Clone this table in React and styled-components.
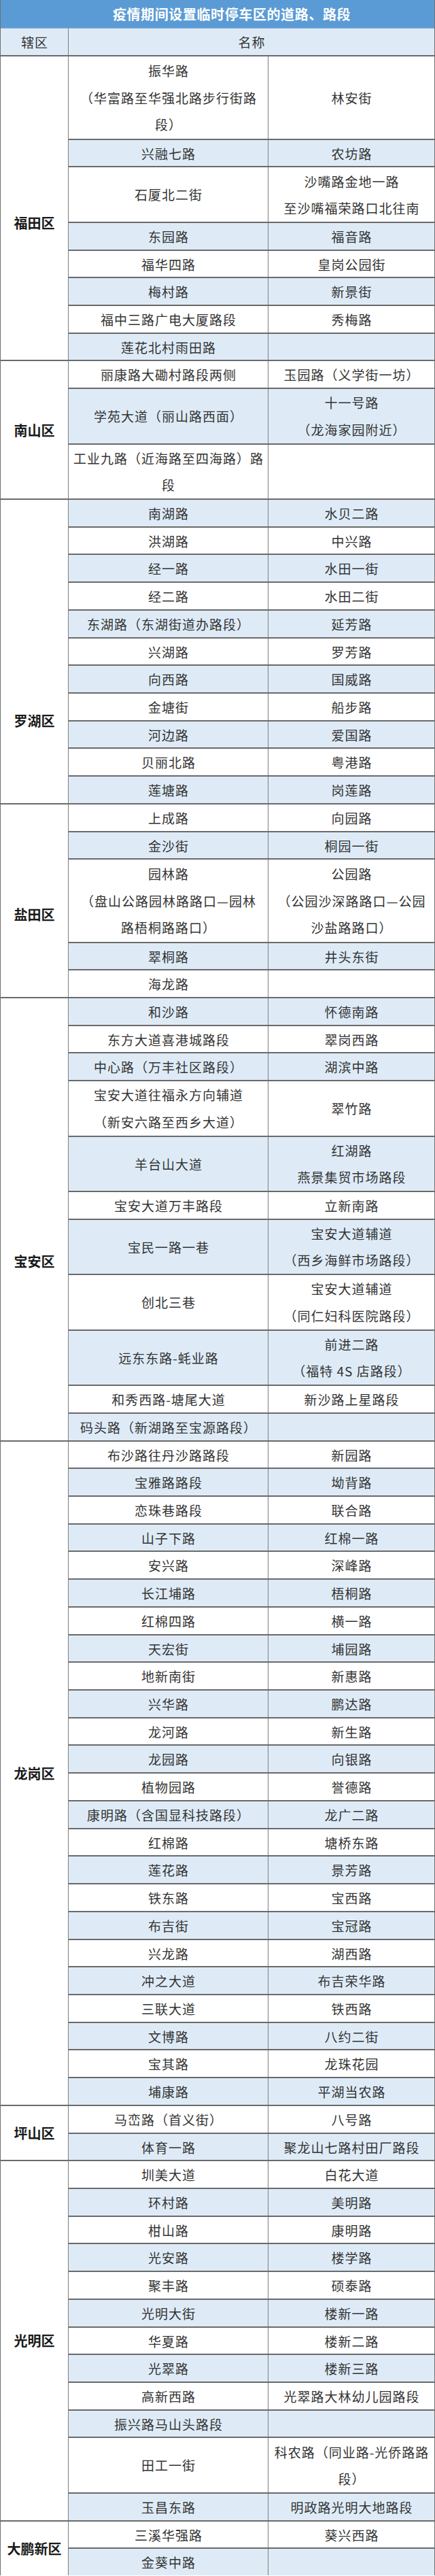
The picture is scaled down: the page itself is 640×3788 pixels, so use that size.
import React from 'react';
import styled, { createGlobalStyle } from 'styled-components';

const LINE = 3788 / 93;

const GlobalStyle = createGlobalStyle`
  html, body { margin: 0; padding: 0; background: #ffffff; }
  body { font-family: "Noto Sans CJK SC", "Noto Sans", sans-serif; }
`;

const Sheet = styled.div`
  width: 640px;
  box-sizing: border-box;
  border-left: 1px solid #6f6f6f;
  border-right: 1px solid #6f6f6f;
  font-family: "Noto Sans CJK SC", "Noto Sans", sans-serif;
`;

const TitleBar = styled.div`
  height: ${LINE}px;
  box-sizing: border-box;
  display: flex;
  align-items: center;
  justify-content: center;
  padding-left: 42px;
  background: #5b9bd5;
  color: #ffffff;
  font-size: 20px;
  font-weight: 700;
  letter-spacing: 0.6px;
  white-space: nowrap;
`;

const HeaderRow = styled.div`
  display: grid;
  grid-template-columns: 100px 1fr;
  height: ${LINE}px;
  box-sizing: border-box;
  background: #deebf7;
  border-top: 1px solid #8eaed6;
`;

const HeaderCell = styled.div`
  display: flex;
  align-items: center;
  justify-content: center;
  font-size: 19px;
  letter-spacing: 1px;
  padding-left: 1px;
  color: #333333;
  border-right: ${(p) => (p.$divider ? '1px solid #7d7d7d' : 'none')};
`;

const Group = styled.section`
  display: grid;
  grid-template-columns: 100px 1fr;
`;

const DistrictCell = styled.div`
  box-sizing: border-box;
  border-top: 2px solid #6a6a6a;
  border-right: 1px solid #7d7d7d;
  display: flex;
  align-items: center;
  justify-content: center;
  padding-top: ${(p) => p.$shift * 2}px;
  font-size: 20px;
  font-weight: 700;
  color: #1a1a1a;
  background: #ffffff;
  white-space: nowrap;
`;

const RoadList = styled.div`
  display: flex;
  flex-direction: column;
`;

const RoadRow = styled.div`
  display: grid;
  grid-template-columns: 294px 1fr;
  height: ${(p) => p.$lines * LINE}px;
  box-sizing: border-box;
  border-top: 2px solid #6a6a6a;
  background: ${(p) => (p.$shaded ? '#deebf7' : '#ffffff')};
`;

const RoadCell = styled.div`
  display: flex;
  flex-direction: column;
  align-items: center;
  justify-content: center;
  border-right: ${(p) => (p.$divider ? '1px solid #7d7d7d' : 'none')};
  font-size: 19px;
  letter-spacing: 1px;
  padding-left: 1px;
  color: #333333;
  line-height: 39.5px;
  white-space: nowrap;
`;

const TextLine = styled.span`
  display: block;
`;

const districts = [
  {
    name: '福田区',
    shift: 21,
    rows: [
      [['振华路', '（华富路至华强北路步行街路', '段）'], ['林安街']],
      [['兴融七路'], ['农坊路']],
      [['石厦北二街'], ['沙嘴路金地一路', '至沙嘴福荣路口北往南']],
      [['东园路'], ['福音路']],
      [['福华四路'], ['皇岗公园街']],
      [['梅村路'], ['新景街']],
      [['福中三路广电大厦路段'], ['秀梅路']],
      [['莲花北村雨田路'], []],
    ],
  },
  {
    name: '南山区',
    shift: 0,
    rows: [
      [['丽康路大磡村路段两侧'], ['玉园路（义学街一坊）']],
      [['学苑大道（丽山路西面）'], ['十一号路', '（龙海家园附近）']],
      [['工业九路（近海路至四海路）路', '段'], []],
    ],
  },
  {
    name: '罗湖区',
    shift: 102,
    rows: [
      [['南湖路'], ['水贝二路']],
      [['洪湖路'], ['中兴路']],
      [['经一路'], ['水田一街']],
      [['经二路'], ['水田二街']],
      [['东湖路（东湖街道办路段）'], ['延芳路']],
      [['兴湖路'], ['罗芳路']],
      [['向西路'], ['国威路']],
      [['金塘街'], ['船步路']],
      [['河边路'], ['爱国路']],
      [['贝丽北路'], ['粤港路']],
      [['莲塘路'], ['岗莲路']],
    ],
  },
  {
    name: '盐田区',
    shift: 20,
    rows: [
      [['上成路'], ['向园路']],
      [['金沙街'], ['桐园一街']],
      [
        ['园林路', '（盘山公路园林路路口—园林', '路梧桐路路口）'],
        ['公园路', '（公园沙深路路口—公园', '沙盐路路口）'],
      ],
      [['翠桐路'], ['井头东街']],
      [['海龙路'], []],
    ],
  },
  {
    name: '宝安区',
    shift: 62,
    rows: [
      [['和沙路'], ['怀德南路']],
      [['东方大道喜港城路段'], ['翠岗西路']],
      [['中心路（万丰社区路段）'], ['湖滨中路']],
      [['宝安大道往福永方向辅道', '（新安六路至西乡大道）'], ['翠竹路']],
      [['羊台山大道'], ['红湖路', '燕景集贸市场路段']],
      [['宝安大道万丰路段'], ['立新南路']],
      [['宝民一路一巷'], ['宝安大道辅道', '（西乡海鲜市场路段）']],
      [['创北三巷'], ['宝安大道辅道', '（同仁妇科医院路段）']],
      [['远东东路-蚝业路'], ['前进二路', '（福特 4S 店路段）']],
      [['和秀西路-塘尾大道'], ['新沙路上星路段']],
      [['码头路（新湖路至宝源路段）'], []],
    ],
  },
  {
    name: '龙岗区',
    shift: 0,
    rows: [
      [['布沙路往丹沙路路段'], ['新园路']],
      [['宝雅路路段'], ['坳背路']],
      [['恋珠巷路段'], ['联合路']],
      [['山子下路'], ['红棉一路']],
      [['安兴路'], ['深峰路']],
      [['长江埔路'], ['梧桐路']],
      [['红棉四路'], ['横一路']],
      [['天宏街'], ['埔园路']],
      [['地新南街'], ['新惠路']],
      [['兴华路'], ['鹏达路']],
      [['龙河路'], ['新生路']],
      [['龙园路'], ['向银路']],
      [['植物园路'], ['誉德路']],
      [['康明路（含国显科技路段）'], ['龙广二路']],
      [['红棉路'], ['塘桥东路']],
      [['莲花路'], ['景芳路']],
      [['铁东路'], ['宝西路']],
      [['布吉街'], ['宝冠路']],
      [['兴龙路'], ['湖西路']],
      [['冲之大道'], ['布吉荣华路']],
      [['三联大道'], ['铁西路']],
      [['文博路'], ['八约二街']],
      [['宝其路'], ['龙珠花园']],
      [['埔康路'], ['平湖当农路']],
    ],
  },
  {
    name: '坪山区',
    shift: 0,
    rows: [
      [['马峦路（首义街）'], ['八号路']],
      [['体育一路'], ['聚龙山七路村田厂路段']],
    ],
  },
  {
    name: '光明区',
    shift: 0,
    rows: [
      [['圳美大道'], ['白花大道']],
      [['环村路'], ['美明路']],
      [['柑山路'], ['康明路']],
      [['光安路'], ['楼学路']],
      [['聚丰路'], ['硕泰路']],
      [['光明大街'], ['楼新一路']],
      [['华夏路'], ['楼新二路']],
      [['光翠路'], ['楼新三路']],
      [['高新西路'], ['光翠路大林幼儿园路段']],
      [['振兴路马山头路段'], []],
      [['田工一街'], ['科农路（同业路-光侨路路', '段）']],
      [['玉昌东路'], ['明政路光明大地路段']],
    ],
  },
  {
    name: '大鹏新区',
    shift: 0,
    rows: [
      [['三溪华强路'], ['葵兴西路']],
      [['金葵中路'], []],
    ],
  },
];

function Cell({ lines, divider }) {
  return (
    <RoadCell $divider={divider}>
      {lines.map((t, i) => (
        <TextLine key={i}>{t}</TextLine>
      ))}
    </RoadCell>
  );
}

export default function App() {
  let index = 0;
  return (
    <>
      <GlobalStyle />
      <Sheet>
        <TitleBar>疫情期间设置临时停车区的道路、路段</TitleBar>
        <HeaderRow>
          <HeaderCell $divider>辖区</HeaderCell>
          <HeaderCell>名称</HeaderCell>
        </HeaderRow>
        {districts.map((d) => (
          <Group key={d.name}>
            <DistrictCell $shift={d.shift}>{d.name}</DistrictCell>
            <RoadList>
              {d.rows.map((r, i) => {
                const lines = Math.max(r[0].length, r[1].length, 1);
                const shaded = index % 2 === 1;
                index += 1;
                return (
                  <RoadRow key={i} $lines={lines} $shaded={shaded}>
                    <Cell lines={r[0]} divider />
                    <Cell lines={r[1]} />
                  </RoadRow>
                );
              })}
            </RoadList>
          </Group>
        ))}
      </Sheet>
    </>
  );
}
